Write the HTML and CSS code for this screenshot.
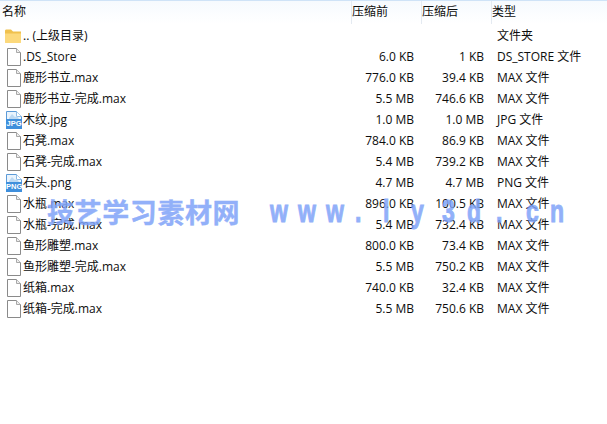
FILE: index.html
```html
<!DOCTYPE html>
<html lang="en">
<head>
    <meta charset="UTF-8">
    <title>压缩文件列表</title>
    <link rel="stylesheet" href="styles.css">
</head>
<body>
    <svg class="icon-defs" width="0" height="0">
        <defs>
            <symbol id="icon-file" viewBox="0 0 16 18">
                <path d="M1.5 .5H10.5L14.5 4.5V17.5H1.5Z" fill="#fff" stroke="#8a8a8a"/>
                <path d="M10.5 .5V4.5H14.5" fill="#eee" stroke="#a8a8a8"/>
            </symbol>
            <symbol id="icon-folder" viewBox="0 0 16 14">
                <path d="M0 2C0 1 .5 .5 1.5 .5H6L8 2.5H16V13.5H0Z" fill="#f0c14e"/>
                <path d="M0 4.5H16V13C16 13.5 15.5 14 15 14H1C.5 14 0 13.5 0 13Z" fill="#fcd97c"/>
            </symbol>
            <symbol id="icon-image" viewBox="0 0 16 18">
                <path d="M.5 .5H10.5L15.5 5.5V17.5H.5Z" fill="#eaf4fd" stroke="#5c9bd8"/>
                <path d="M10.5 .5V5.5H15.5" fill="#fff" stroke="#8fbce6"/>
                <path d="M3 7L6 3L9 6L11 5L13 8H3Z" fill="#bcd9f3"/>
                <rect x="0" y="8" width="16" height="10" fill="#3f8fdc"/>
            </symbol>
        </defs>
    </svg>

    <div class="list">
        <div class="list-header">
            <div class="head-name">名称</div>
            <div class="head-col">压缩前</div>
            <div class="head-col">压缩后</div>
            <div class="head-col">类型</div>
        </div>

        <div class="row">
            <div class="name"><svg class="icon folder"><use href="#icon-folder"/></svg><span>.. (上级目录)</span></div>
            <div class="size"></div><div class="size"></div><div class="type">文件夹</div>
        </div>
        <div class="row">
            <div class="name"><svg class="icon"><use href="#icon-file"/></svg><span>.DS_Store</span></div>
            <div class="size">6.0 KB</div><div class="size">1 KB</div><div class="type">DS_STORE 文件</div>
        </div>
        <div class="row">
            <div class="name"><svg class="icon"><use href="#icon-file"/></svg><span>鹿形书立.max</span></div>
            <div class="size">776.0 KB</div><div class="size">39.4 KB</div><div class="type">MAX 文件</div>
        </div>
        <div class="row">
            <div class="name"><svg class="icon"><use href="#icon-file"/></svg><span>鹿形书立-完成.max</span></div>
            <div class="size">5.5 MB</div><div class="size">746.6 KB</div><div class="type">MAX 文件</div>
        </div>
        <div class="row">
            <div class="name"><svg class="icon"><use href="#icon-image"/></svg><span class="badge">JPG</span><span>木纹.jpg</span></div>
            <div class="size">1.0 MB</div><div class="size">1.0 MB</div><div class="type">JPG 文件</div>
        </div>
        <div class="row">
            <div class="name"><svg class="icon"><use href="#icon-file"/></svg><span>石凳.max</span></div>
            <div class="size">784.0 KB</div><div class="size">86.9 KB</div><div class="type">MAX 文件</div>
        </div>
        <div class="row">
            <div class="name"><svg class="icon"><use href="#icon-file"/></svg><span>石凳-完成.max</span></div>
            <div class="size">5.4 MB</div><div class="size">739.2 KB</div><div class="type">MAX 文件</div>
        </div>
        <div class="row">
            <div class="name"><svg class="icon"><use href="#icon-image"/></svg><span class="badge">PNG</span><span>石头.png</span></div>
            <div class="size">4.7 MB</div><div class="size">4.7 MB</div><div class="type">PNG 文件</div>
        </div>
        <div class="row">
            <div class="name"><svg class="icon"><use href="#icon-file"/></svg><span>水瓶.max</span></div>
            <div class="size">896.0 KB</div><div class="size">100.5 KB</div><div class="type">MAX 文件</div>
        </div>
        <div class="row">
            <div class="name"><svg class="icon"><use href="#icon-file"/></svg><span>水瓶-完成.max</span></div>
            <div class="size">5.4 MB</div><div class="size">732.4 KB</div><div class="type">MAX 文件</div>
        </div>
        <div class="row">
            <div class="name"><svg class="icon"><use href="#icon-file"/></svg><span>鱼形雕塑.max</span></div>
            <div class="size">800.0 KB</div><div class="size">73.4 KB</div><div class="type">MAX 文件</div>
        </div>
        <div class="row">
            <div class="name"><svg class="icon"><use href="#icon-file"/></svg><span>鱼形雕塑-完成.max</span></div>
            <div class="size">5.5 MB</div><div class="size">750.2 KB</div><div class="type">MAX 文件</div>
        </div>
        <div class="row">
            <div class="name"><svg class="icon"><use href="#icon-file"/></svg><span>纸箱.max</span></div>
            <div class="size">740.0 KB</div><div class="size">32.4 KB</div><div class="type">MAX 文件</div>
        </div>
        <div class="row">
            <div class="name"><svg class="icon"><use href="#icon-file"/></svg><span>纸箱-完成.max</span></div>
            <div class="size">5.5 MB</div><div class="size">750.6 KB</div><div class="type">MAX 文件</div>
        </div>
    </div>

    <div class="watermark">
        <span class="mark-cn">技艺学习素材网</span>
        <span class="mark-url">
            <span>w</span><span>w</span><span>w</span><span>.</span><span>l</span><span>y</span><span>3</span><span>d</span><span>.</span><span>c</span><span>n</span>
        </span>
    </div>
</body>
</html>
```

FILE: styles.css
```css
body {
    margin: 0;
    background: white;
    color: #0d0d0d;
    font-family: "Open Sans", "Noto Sans CJK SC", sans-serif;
    font-size: 12px;
    overflow: hidden;
}

.icon-defs {
    display: block;
}

.list-header {
    display: grid;
    grid-template-columns: 351px 70px 70px 1fr;
    height: 23px;
    margin-bottom: 1px;
    border-top: 1px solid #cfe3f7;
    background: linear-gradient(#f6fafe, #ffffff);
    line-height: 22px;
}

.head-name {
    padding-left: 2px;
}

.head-col {
    border-left: 1px solid #e4eaf1;
}

.row {
    display: grid;
    grid-template-columns: 344px 70px 70px 1fr;
    height: 21px;
    line-height: 21px;
    white-space: nowrap;
}

.name {
    display: flex;
    align-items: center;
    position: relative;
    padding-left: 6px;
}

.icon {
    width: 16px;
    height: 18px;
    margin-right: 1px;
    flex: none;
}

.folder {
    height: 14px;
    margin-left: -1px;
    margin-right: 2px;
}

.badge {
    position: absolute;
    left: 6px;
    bottom: 2px;
    width: 16px;
    color: white;
    font-family: "Liberation Sans", sans-serif;
    font-size: 7.5px;
    font-weight: bold;
    line-height: 9px;
    text-align: center;
}

.size {
    text-align: right;
}

.type {
    padding-left: 13px;
}

.watermark {
    position: absolute;
    left: 47px;
    top: 193px;
    display: flex;
    color: #7fa3f8;
    opacity: 0.85;
    font-family: "Noto Sans CJK SC", sans-serif;
    font-weight: bold;
    font-size: 27px;
    line-height: 38px;
    white-space: nowrap;
}

.mark-cn {
    width: 223px;
    letter-spacing: 0.6px;
    -webkit-text-stroke: 0.4px #7fa3f8;
}

.mark-url {
    display: flex;
    margin-top: -1px;
    font-family: "Liberation Sans", sans-serif;
    font-size: 32px;
    -webkit-text-stroke: 1px #7fa3f8;
}

/* letters are tall and narrow and sit on uneven steps in the original */
.mark-url span {
    width: 28px;
    transform: scaleX(0.72);
    transform-origin: left;
}

.mark-url span:nth-child(3) { width: 29px; }
.mark-url span:nth-child(6) { width: 31px; }
.mark-url span:nth-child(7) { width: 25px; }
.mark-url span:nth-child(8) { width: 29px; }
.mark-url span:nth-child(9) { width: 30px; }
.mark-url span:nth-child(10) { width: 24px; }
```
